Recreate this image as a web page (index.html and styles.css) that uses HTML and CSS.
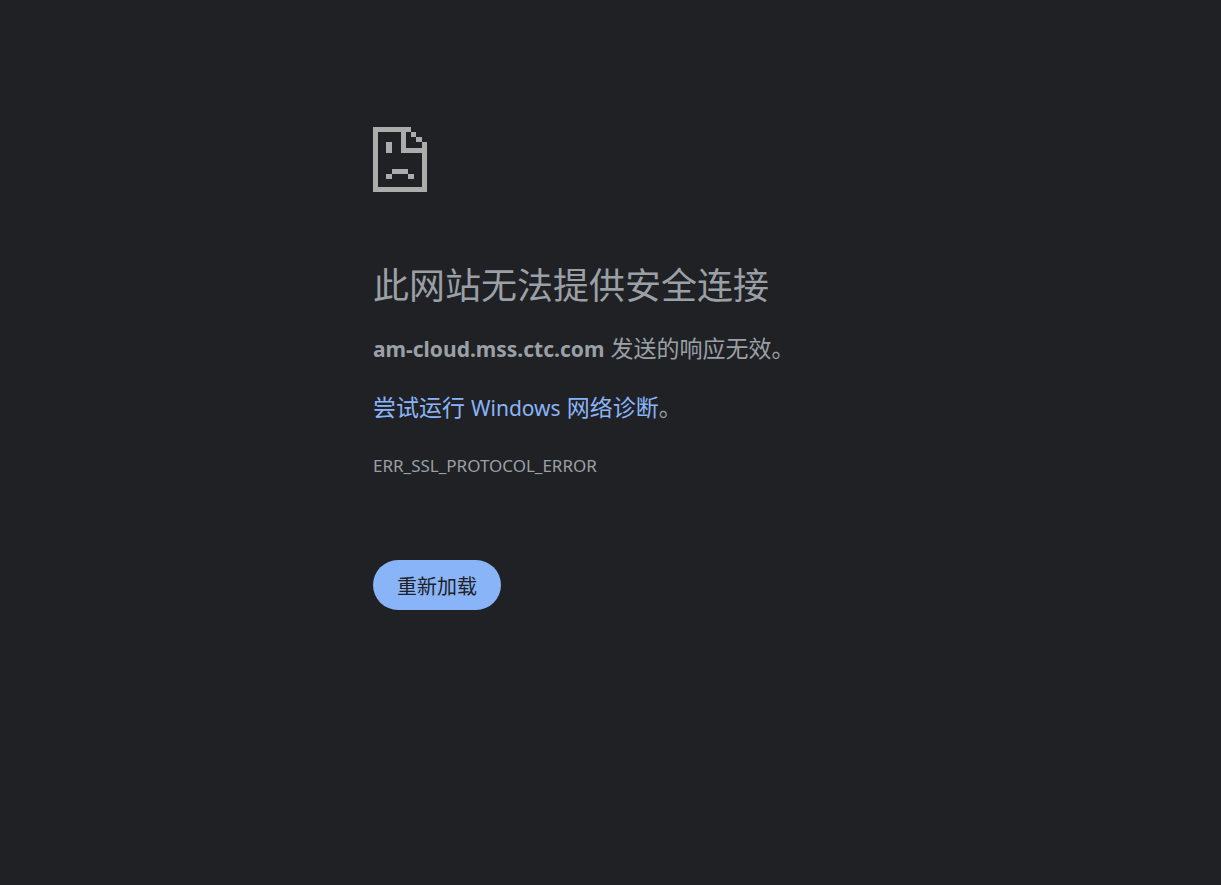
FILE: index.html
```html
<!DOCTYPE html>
<html lang="zh-CN">
<head>
<meta charset="utf-8">
<meta name="viewport" content="width=device-width, initial-scale=1">
<title>am-cloud.mss.ctc.com</title>
<link rel="stylesheet" href="styles.css">
</head>
<body>
<main class="error">
  <svg class="error-icon" viewBox="0 0 54 65" shape-rendering="crispEdges" aria-hidden="true">
    <path d="M0 0H38V5H33V21H54V65H0ZM5 5V60H49V26H28V5Z" fill-rule="evenodd"/>
    <path d="M38 5h5v5h-5zM43 10h6v5h-6zM49 15h5v6h-5zM13 15h6v11h-6zM19 42h16v5h-16zM13 47h6v5h-6zM35 47h6v5h-6z"/>
  </svg>
  <h1 class="error-title">此网站无法提供安全连接</h1>
  <p class="error-text"><strong class="error-host">am-cloud.mss.ctc.com</strong> 发送的响应无效。</p>
  <p class="error-text"><a class="error-link" href="#">尝试运行 <span class="error-product">Windows</span> 网络诊断</a>。</p>
  <p class="error-code">ERR_SSL_PROTOCOL_ERROR</p>
  <button class="reload" type="button">重新加载</button>
</main>
</body>
</html>
```
FILE: styles.css
```css
body {
  margin: 0;
  background: #202124;
  color: #9aa0a6;
  font-family: "Noto Sans", "Noto Sans CJK SC", sans-serif;
}

.error {
  display: flex;
  flex-direction: column;
  align-items: flex-start;
  max-width: 475px;
  margin: 0 auto;
  padding: 127px 24px 40px;
}

.error-icon {
  width: 54px;
  height: 65px;
  fill: #acacac;
}

.error-title {
  margin: 69px 0 22px;
  font-size: 36px;
  font-weight: 400;
  line-height: 50px;
}

.error-text {
  margin: 0 0 28px;
  font-size: 23px;
  line-height: 30px;
}

.error-host,
.error-product {
  font-size: 21px;
}

.error-link {
  color: #8ab4f8;
  text-decoration: none;
}

.error-code {
  margin: 0;
  font-size: 17px;
  line-height: 30px;
}

.reload {
  margin-top: 79px;
  padding: 4px 24px 0;
  border: 0;
  border-radius: 25px;
  background: #8ab4f8;
  color: #202124;
  font-family: inherit;
  font-size: 20px;
  line-height: 46px;
  cursor: pointer;
}
```
